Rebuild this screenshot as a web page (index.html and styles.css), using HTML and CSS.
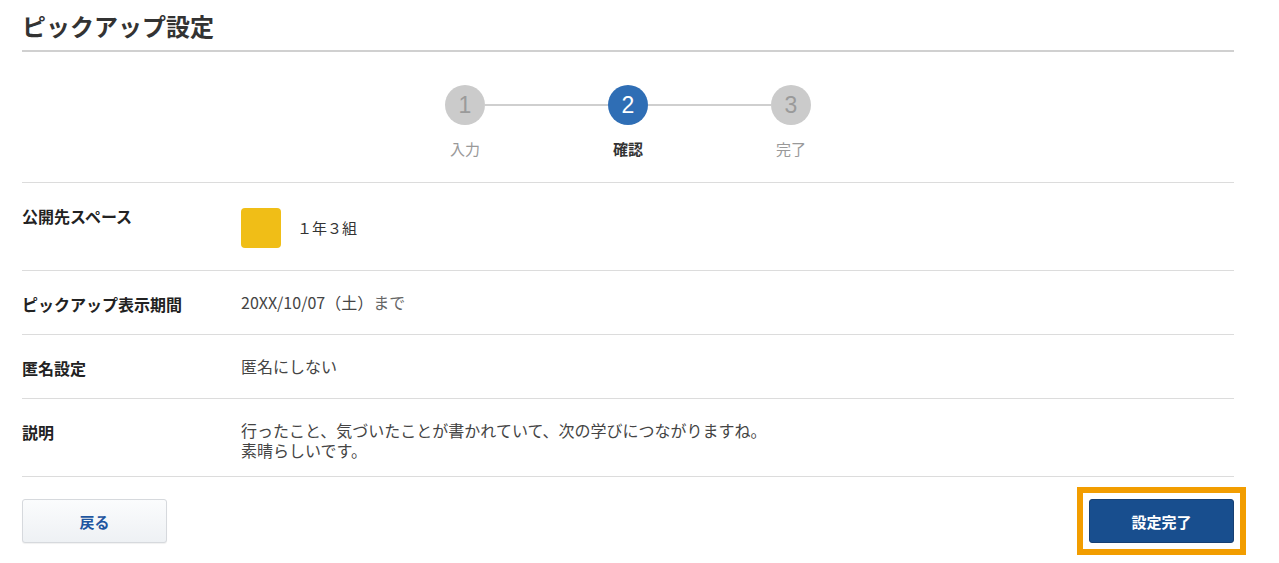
FILE: index.html
```html
<!DOCTYPE html>
<html lang="ja">

<head>
	<meta charset="UTF-8">
	<meta name="viewport"
				content="width=device-width, initial-scale=1.0">
	<title>ピックアップ設定</title>
	<link rel="stylesheet" href="styles.css">
</head>

<body>
	<div class="page">
		<h1 class="page-title">ピックアップ設定</h1>

		<div class="stepper">
			<div class="step">
				<span class="step-num">1</span>
				<span class="step-label">入力</span>
			</div>
			<div class="step-line"></div>
			<div class="step current">
				<span class="step-num">2</span>
				<span class="step-label">確認</span>
			</div>
			<div class="step-line"></div>
			<div class="step">
				<span class="step-num">3</span>
				<span class="step-label">完了</span>
			</div>
		</div>

		<dl class="confirm-list">
			<div class="confirm-row">
				<dt>公開先スペース</dt>
				<dd>
					<div class="space">
						<span class="space-icon"></span>
						<span class="space-name">１年３組</span>
					</div>
				</dd>
			</div>
			<div class="confirm-row">
				<dt>ピックアップ表示期間</dt>
				<dd>20XX/10/07（土）<span class="small">まで</span></dd>
			</div>
			<div class="confirm-row">
				<dt>匿名設定</dt>
				<dd>匿名にしない</dd>
			</div>
			<div class="confirm-row">
				<dt>説明</dt>
				<dd>行ったこと、気づいたことが書かれていて、次の学びにつながりますね。<br>素晴らしいです。</dd>
			</div>
		</dl>

		<div class="actions">
			<button class="btn btn-back">戻る</button>
			<div class="highlight">
				<button class="btn btn-primary">設定完了</button>
			</div>
		</div>
	</div>
</body>

</html>
```

FILE: styles.css
```css
* {
	box-sizing: border-box;
}

body {
	margin: 0;
	background-color: #fff;
	color: #333;
	font-family: "Noto Sans CJK JP", "Liberation Sans", sans-serif;
}

.page {
	padding: 0 45px 0 22px;
}

.page-title {
	margin: 0;
	padding: 8px 0 7px;
	font-size: 24px;
	line-height: 35px;
	font-weight: bold;
	color: #333;
	border-bottom: 2px solid #d0d0d0;
}

/* stepper */
.stepper {
	display: flex;
	justify-content: center;
	align-items: flex-start;
	padding: 33px 0 0;
	height: 131px;
	border-bottom: 1px solid #dcdcdc;
}

.step {
	display: flex;
	flex-direction: column;
	align-items: center;
	width: 40px;
}

.step-num {
	display: flex;
	align-items: center;
	justify-content: center;
	width: 40px;
	height: 40px;
	border-radius: 50%;
	background-color: #cbcbcb;
	color: #9a9a9a;
	font-family: "Liberation Sans", sans-serif;
	font-size: 23px;
}

.step-label {
	margin-top: 13px;
	white-space: nowrap;
	font-size: 15px;
	line-height: 22px;
	color: #999;
}

.step.current .step-num {
	background-color: #2f6eb5;
	color: #fff;
}

.step.current .step-label {
	color: #333;
	font-weight: bold;
}

.step-line {
	width: 123px;
	height: 2px;
	margin-top: 19px;
	background-color: #cfcfcf;
}

/* confirm list */
.confirm-list {
	margin: 0;
}

.confirm-row {
	display: flex;
	align-items: flex-start;
	padding: 18px 0;
	border-bottom: 1px solid #dcdcdc;
}

.confirm-row:last-child {
	padding-bottom: 16px;
}

.confirm-row dt {
	width: 219px;
	flex-shrink: 0;
	padding-top: 3px;
	font-size: 16px;
	line-height: 24px;
	font-weight: bold;
	color: #222;
}

.confirm-row dd {
	margin: 0;
	padding-top: 3px;
	font-size: 16px;
	line-height: 20px;
	color: #444;
}

.small {
	color: #666;
}

.space {
	display: flex;
	align-items: center;
	padding: 4px 0;
}

.space-icon {
	width: 40px;
	height: 40px;
	border-radius: 4px;
	background-color: #f0be17;
}

.space-name {
	margin-left: 16px;
	font-size: 15px;
	color: #333;
}

/* buttons */
.actions {
	display: flex;
	justify-content: space-between;
	align-items: center;
	margin-top: 10px;
}

.btn {
	width: 145px;
	height: 44px;
	border-radius: 3px;
	font-family: inherit;
	font-size: 15px;
	font-weight: bold;
	cursor: pointer;
}

.btn-back {
	border: 1px solid #d6d9dd;
	background-color: #f3f5f8;
	background-image: linear-gradient(#fbfcfd, #eef1f4);
	color: #1f56a0;
	box-shadow: 0 1px 1px rgba(0, 0, 0, 0.06);
}

.highlight {
	display: flex;
	padding: 6px;
	margin-right: -12px;
	border: 6px solid #f29d00;
}

.btn-primary {
	border: 1px solid #163f73;
	background-color: #184e8e;
	color: #fff;
}
```
